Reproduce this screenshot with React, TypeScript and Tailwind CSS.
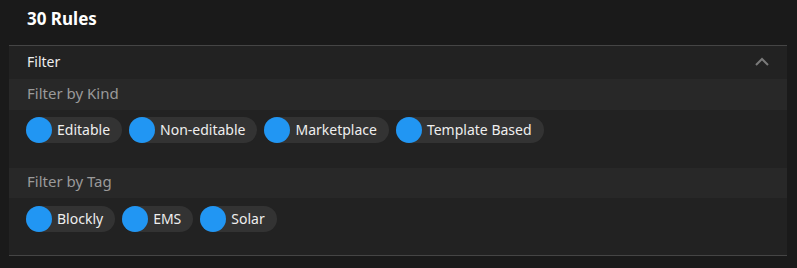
import React from "react";

const Chip = ({ label }: { label: string }) => (
  <div className="flex items-center h-[26px] rounded-full bg-[#333333] pr-[12px]">
    <div className="w-[26px] h-[26px] rounded-full bg-[#2196f3]" />
    <span className="ml-[5px] text-[14px] leading-none text-[#eeeeee]">{label}</span>
  </div>
);

export default function App() {
  return (
    <div
      className="w-[797px] h-[268px] bg-[#1a1a1a] text-white overflow-hidden"
      style={{ fontFamily: '"Noto Sans", "Open Sans", sans-serif' }}
    >
      <div className="h-[45px] pl-[27px] flex items-center">
        <h1 className="text-[17px] font-bold leading-none text-white -mt-[8px]">30 Rules</h1>
      </div>
      <div className="ml-[9px] w-[778px] bg-[#222222] border-t border-b border-[#454545]">
        <div className="h-[33px] flex items-center justify-between pl-[18px] pr-[17px]">
          <span className="text-[14px] text-[#eeeeee] -mt-[3px]">Filter</span>
          <svg width="16" height="10" viewBox="0 0 16 10" className="-mt-[2px]">
            <path d="M2 8 L8 2 L14 8" fill="none" stroke="#7a7a7a" strokeWidth="2" />
          </svg>
        </div>
        <div className="h-[31px] bg-[#282828] flex items-center pl-[18px]">
          <span className="text-[15px] text-[#9a9a9a] -mt-[3px]">Filter by Kind</span>
        </div>
        <div className="pt-[7px] pb-[25px] pl-[17px] flex gap-[7px]">
          <Chip label="Editable" />
          <Chip label="Non-editable" />
          <Chip label="Marketplace" />
          <Chip label="Template Based" />
        </div>
        <div className="h-[30px] bg-[#282828] flex items-center pl-[18px]">
          <span className="text-[15px] text-[#9a9a9a] -mt-[3px]">Filter by Tag</span>
        </div>
        <div className="pt-[8px] pb-[23px] pl-[17px] flex gap-[7px]">
          <Chip label="Blockly" />
          <Chip label="EMS" />
          <Chip label="Solar" />
        </div>
      </div>
    </div>
  );
}
